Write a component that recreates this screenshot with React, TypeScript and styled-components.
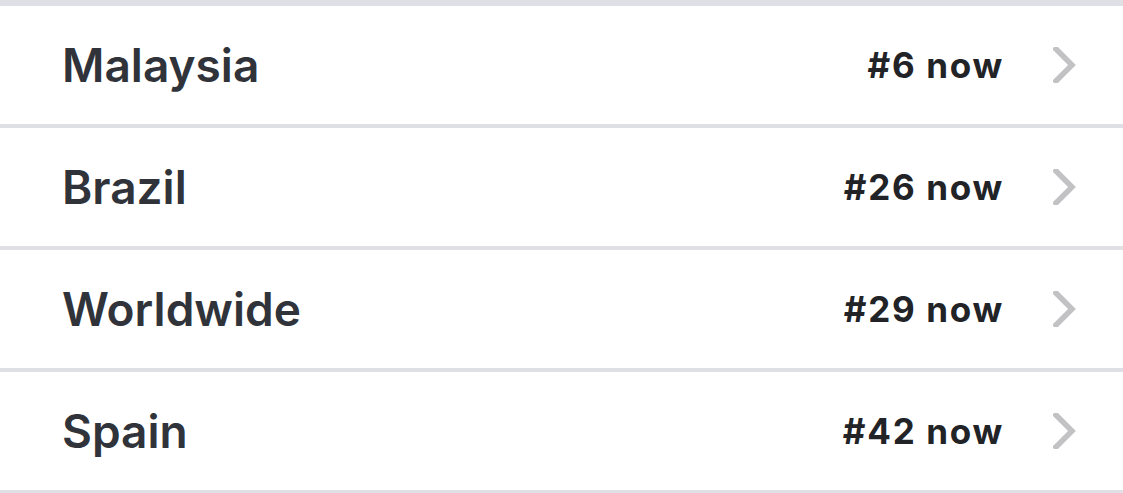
import React from "react";
import styled, { createGlobalStyle } from "styled-components";

const Global = createGlobalStyle`
  html, body { margin: 0; padding: 0; background: #ffffff; }
  body { font-family: Inter, "Noto Sans", sans-serif; -webkit-font-smoothing: antialiased; }
`;

const List = styled.div`
  width: 1123px;
  display: flex;
  flex-direction: column;
  border-top: 6px solid #dfe0e5;
  background: #ffffff;
`;

const Row = styled.div`
  height: 118px;
  display: flex;
  align-items: center;
  padding: 0 46px 0 62px;
  border-bottom: 4px solid #dfe0e5;
`;

const Name = styled.span`
  flex: 1;
  font-size: 46px;
  font-weight: 600;
  color: #30333a;
  letter-spacing: 0;
`;

const Rank = styled.span`
  font-size: 35px;
  font-weight: 700;
  color: #222327;
  letter-spacing: 1.7px;
  margin-right: 49px;
`;

const Chevron = styled.svg`
  width: 24px;
  height: 36px;
  display: block;
`;

const rows = [
  { name: "Malaysia", rank: "#6 now" },
  { name: "Brazil", rank: "#26 now" },
  { name: "Worldwide", rank: "#29 now" },
  { name: "Spain", rank: "#42 now" },
];

export default function App() {
  return (
    <>
      <Global />
      <List>
        {rows.map((r) => (
          <Row key={r.name}>
            <Name>{r.name}</Name>
            <Rank>{r.rank}</Rank>
            <Chevron viewBox="0 0 24 36">
              <polyline
                points="3,2 19,18 3,34"
                fill="none"
                stroke="#c2c2c4"
                strokeWidth="5.5"
                strokeLinecap="square"
                strokeLinejoin="miter"
              />
            </Chevron>
          </Row>
        ))}
      </List>
    </>
  );
}
